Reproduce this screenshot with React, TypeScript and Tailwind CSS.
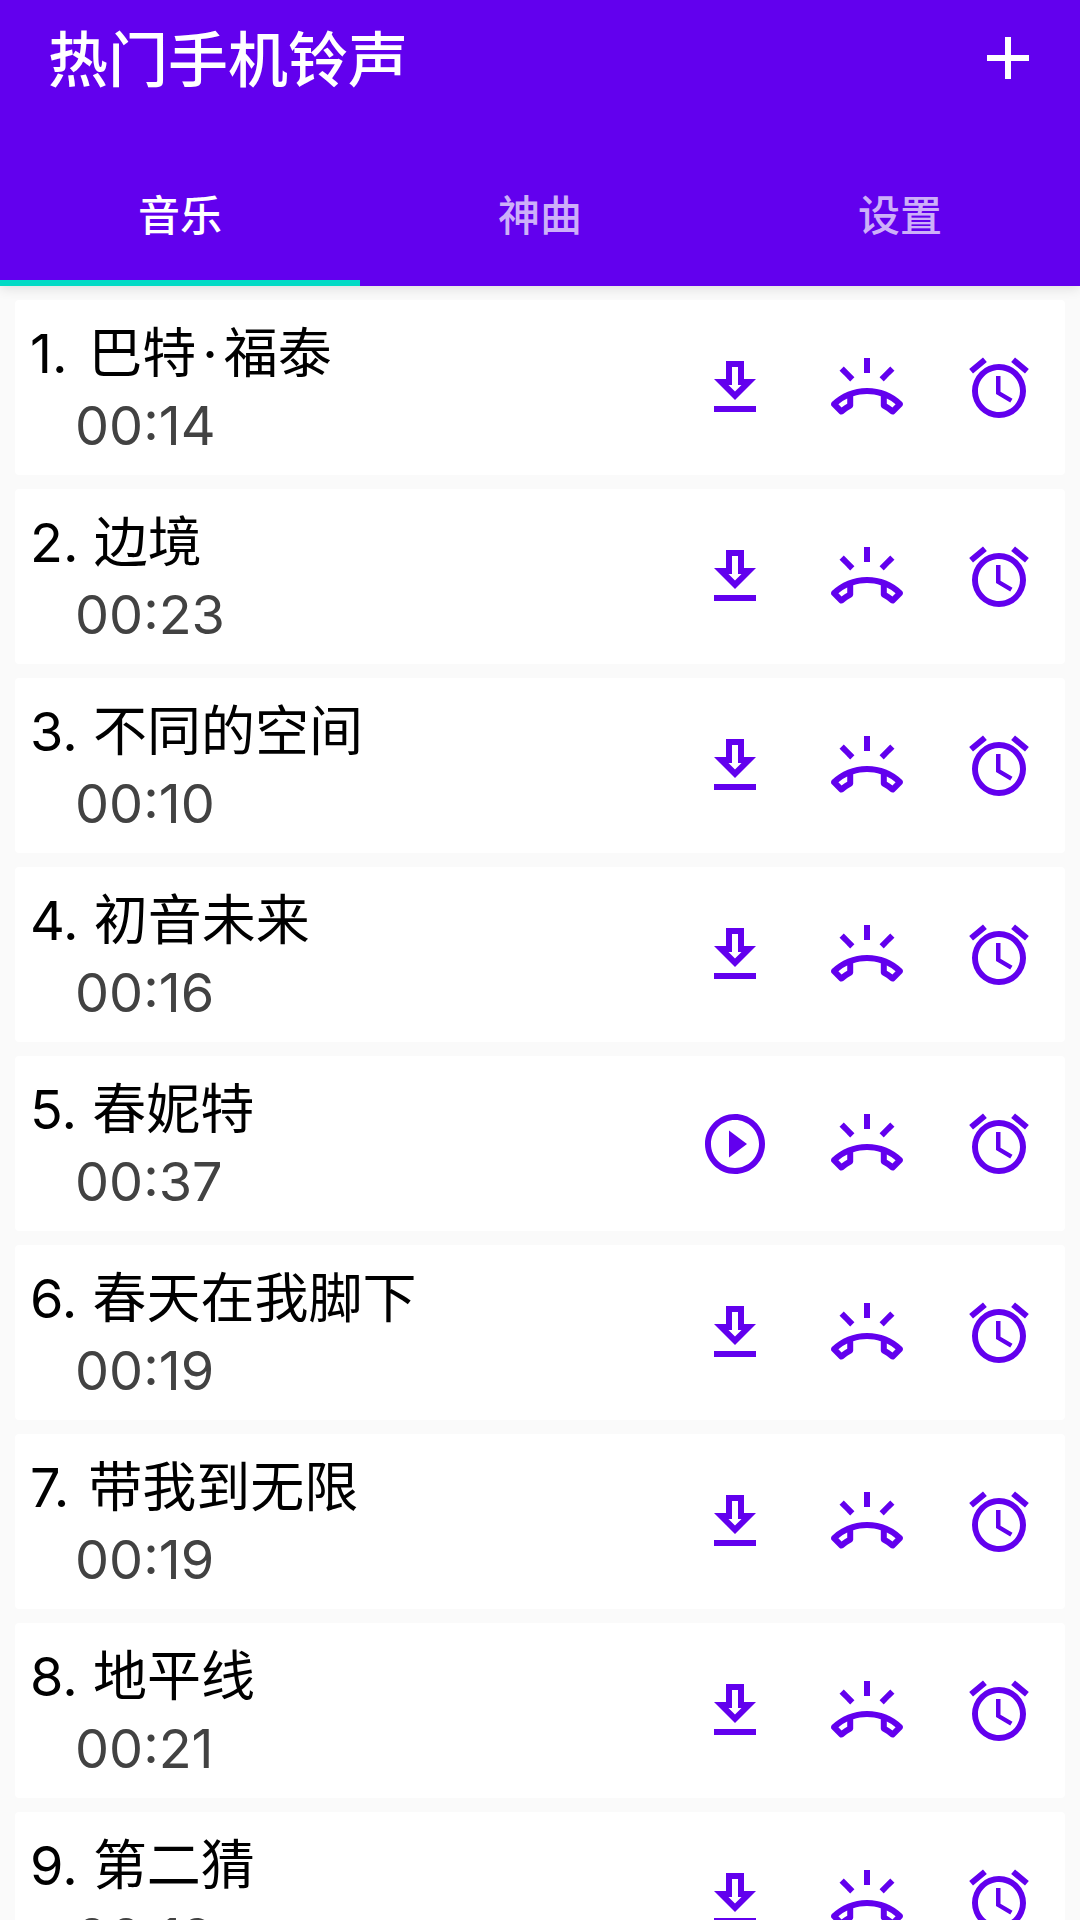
import React, { useState } from 'react';
import { MdAdd, MdOutlineAlarm, MdOutlineRingVolume, MdPlayCircleOutline } from 'react-icons/md';

interface Ringtone {
  id: number;
  name: React.ReactNode;
  duration: string;
  downloaded?: boolean;
}

const TABS = ['音乐', '神曲', '设置'];

const RINGTONES: Ringtone[] = [
  { id: 1, name: <>巴特<span className="mx-1.5">·</span>福泰</>, duration: '00:14' },
  { id: 2, name: '边境', duration: '00:23' },
  { id: 3, name: '不同的空间', duration: '00:10' },
  { id: 4, name: '初音未来', duration: '00:16' },
  { id: 5, name: '春妮特', duration: '00:37', downloaded: true },
  { id: 6, name: '春天在我脚下', duration: '00:19' },
  { id: 7, name: '带我到无限', duration: '00:19' },
  { id: 8, name: '地平线', duration: '00:21' },
  { id: 9, name: '第二猜', duration: '00:19' },
];

// Outlined arrow over a bar
const DownloadIcon: React.FC = () => (
  <svg viewBox="0 0 24 24" width="1em" height="1em" fill="currentColor">
    <path d="M19 9h-4V3H9v6H5l7 7 7-7zm-8 2V5h2v6h1.17L12 13.17 9.83 11H11zm-6 7h14v2H5z" />
  </svg>
);

const RingtoneRow: React.FC<{ ringtone: Ringtone }> = ({ ringtone }) => {
  return (
    <li className="flex h-[175px] shrink-0 items-center justify-between rounded-sm bg-white pl-[15px] pr-[30px]">
      <div className="min-w-0 pt-1 text-[54px] leading-[72px]">
        <h2 className="truncate text-black">
          <span className="inline-block min-w-[43px] align-top">{ringtone.id}.</span> {ringtone.name}
        </h2>
        <p className="pl-[45px] text-[#424242]">{ringtone.duration}</p>
      </div>

      <div className="flex shrink-0 gap-[60px] text-[72px] text-[#6200ee]">
        {ringtone.downloaded ? (
          <button type="button" aria-label="播放">
            <MdPlayCircleOutline />
          </button>
        ) : (
          <button type="button" aria-label="下载">
            <DownloadIcon />
          </button>
        )}
        <button type="button" aria-label="设为来电铃声">
          <MdOutlineRingVolume />
        </button>
        <button type="button" aria-label="设为闹钟铃声">
          <MdOutlineAlarm />
        </button>
      </div>
    </li>
  );
};

const App: React.FC = () => {
  const [activeTab, setActiveTab] = useState(0);

  return (
    <div className="flex h-screen flex-col bg-[#fafafa] font-['Inter','Noto_Sans_CJK_SC',sans-serif]">
      <header className="z-10 shrink-0 bg-[#6200ee] text-white shadow-[0_2px_12px_rgba(0,0,0,0.12)]">
        <div className="mb-[26px] flex h-[116px] items-center justify-between pl-12 pr-9">
          <h1 className="pt-1 text-[60px] leading-[72px] font-medium">热门手机铃声</h1>
          <button type="button" aria-label="添加" className="text-[72px]">
            <MdAdd />
          </button>
        </div>

        <nav className="grid grid-cols-3" role="tablist">
          {TABS.map((tab, index) => (
            <button
              key={tab}
              type="button"
              role="tab"
              aria-selected={activeTab === index}
              onClick={() => setActiveTab(index)}
              className={`h-36 border-b-6 pt-2 text-[42px] font-medium ${
                activeTab === index
                  ? 'border-b-[#03dac5] text-white'
                  : 'border-b-transparent text-white/70'
              }`}
            >
              {tab}
            </button>
          ))}
        </nav>
      </header>

      <main className="min-h-0 flex-1 overflow-y-auto [scrollbar-width:none]">
        <ul className="flex flex-col gap-[14px] px-[15px] py-[14px]">
          {RINGTONES.map((ringtone) => (
            <RingtoneRow key={ringtone.id} ringtone={ringtone} />
          ))}
        </ul>
      </main>
    </div>
  );
};

export default App;
